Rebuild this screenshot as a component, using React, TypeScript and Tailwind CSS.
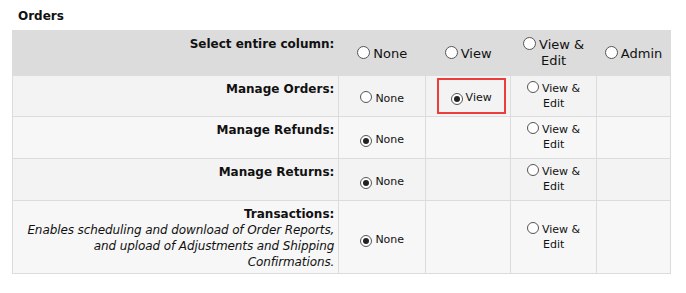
function Radio({ checked, size = "sm" }: { checked?: boolean; size?: "sm" | "lg" }) {
  const box = size === "lg" ? "w-[13px] h-[13px]" : "w-[12px] h-[12px]";
  return (
    <span
      className={`inline-flex ${box} shrink-0 items-center justify-center rounded-full border border-[#555] bg-white align-[-1px] mr-[3px]`}
    >
      {checked && <span className="w-[6px] h-[6px] rounded-full bg-[#222]" />}
    </span>
  );
}

function RowOpt({ label, checked, wrap }: { label: string; checked?: boolean; wrap?: boolean }) {
  return (
    <div className={`text-[11px] leading-[15px] text-[#111] ${wrap ? "w-[60px] mx-auto" : ""}`}>
      <Radio checked={checked} />
      {label}
    </div>
  );
}

const rows = [
  { label: "Manage Orders:", none: false, view: true, bg: "bg-[#f3f3f3]", h: "h-[41px]" },
  { label: "Manage Refunds:", none: true, view: false, bg: "bg-[#f7f7f7]", h: "h-[42px]" },
  { label: "Manage Returns:", none: true, view: false, bg: "bg-[#f3f3f3]", h: "h-[42px]" },
];

export default function App() {
  const cell = "border border-[#dcdcdc]";
  return (
    <div className="bg-white w-[686px] h-[293px] font-['DejaVu_Sans',Verdana,sans-serif] text-[#111]">
      <div className="pl-[18px] pt-[9px] pb-[7px] text-[12px] font-bold leading-[14px]">Orders</div>
      <table className="ml-[12px] w-[659px] border-collapse">
        <colgroup>
          <col className="w-[327px]" />
          <col className="w-[87px]" />
          <col className="w-[85px]" />
          <col className="w-[86px]" />
          <col className="w-[74px]" />
        </colgroup>
        <tbody>
          <tr className="bg-[#dcdcdc] h-[45px]">
            <td className={`${cell} align-top text-right pr-[4px] pt-[6px] text-[12px] font-bold leading-[15px]`}>
              Select entire column:
            </td>
            <td className={`${cell} text-center text-[13px] leading-[16px] pt-[2px]`}>
              <Radio size="lg" />None
            </td>
            <td className={`${cell} text-center text-[13px] leading-[16px] pt-[2px]`}>
              <Radio size="lg" />View
            </td>
            <td className={`${cell} text-center text-[13px] leading-[16px]`}>
              <div className="w-[64px] mx-auto">
                <Radio size="lg" />View &amp; Edit
              </div>
            </td>
            <td className={`${cell} text-center text-[13px] leading-[16px] pt-[2px]`}>
              <Radio size="lg" />Admin
            </td>
          </tr>
          {rows.map((r) => (
            <tr key={r.label} className={`${r.bg} ${r.h}`}>
              <td className={`${cell} align-top text-right pr-[4px] pt-[6px] text-[12px] font-bold leading-[15px]`}>
                {r.label}
              </td>
              <td className={`${cell} text-center align-middle pt-[4px]`}>
                <RowOpt label="None" checked={r.none} />
              </td>
              <td className={`${cell} text-center align-middle`}>
                {r.label === "Manage Orders:" && (
                  <div className="inline-flex items-center justify-center ml-[6px] pt-[2px] w-[69px] h-[36px] border-2 border-[#ee3b3b]">
                    <RowOpt label="View" checked={r.view} />
                  </div>
                )}
              </td>
              <td className={`${cell} text-center align-top pt-[5px]`}>
                <RowOpt label="View & Edit" wrap />
              </td>
              <td className={cell} />
            </tr>
          ))}
          <tr className="bg-[#f7f7f7] h-[73px]">
            <td className={`${cell} align-top text-right pr-[4px] pt-[5px] text-[12px] leading-[16px]`}>
              <div className="font-bold">Transactions:</div>
              <div className="italic tracking-[-0.1px]">
                Enables scheduling and download of Order Reports, and upload of Adjustments and Shipping
                Confirmations.
              </div>
            </td>
            <td className={`${cell} text-center align-middle pt-[4px]`}>
              <RowOpt label="None" checked />
            </td>
            <td className={cell} />
            <td className={`${cell} text-center align-middle`}>
              <RowOpt label="View & Edit" wrap />
            </td>
            <td className={cell} />
          </tr>
        </tbody>
      </table>
    </div>
  );
}
